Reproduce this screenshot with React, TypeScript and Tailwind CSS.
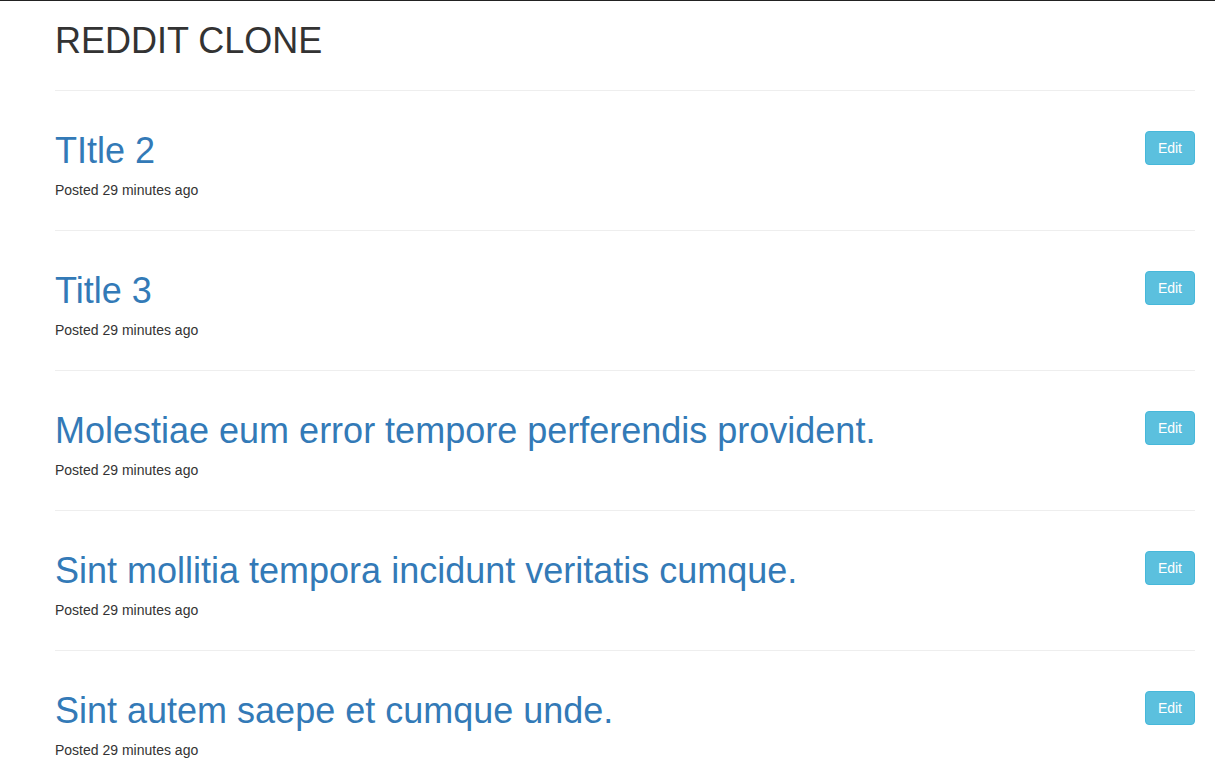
import React from "react";

const posts = [
  "TItle 2",
  "Title 3",
  "Molestiae eum error tempore perferendis provident.",
  "Sint mollitia tempora incidunt veritatis cumque.",
  "Sint autem saepe et cumque unde.",
];

export default function App() {
  return (
    <div
      className="min-h-screen bg-white border-t border-[#222222] text-[#333333] text-[14px] leading-[20px]"
      style={{ fontFamily: '"Liberation Sans", Arial, sans-serif' }}
    >
      <div className="ml-[55px] w-[1140px]">
        <h1 className="mt-[20px] mb-[30px] text-[36px] leading-[39px] font-normal text-[#333333]">
          REDDIT CLONE
        </h1>
        {posts.map((title, i) => (
          <div key={i}>
            <hr className="mt-[20px] mb-[20px] border-0 border-t border-[#eeeeee]" />
            <div className="flex items-start justify-between">
              <div>
                <h1 className="mt-[20px] mb-[10px] text-[36px] leading-[39px] font-normal text-[#337ab7]">
                  <a href="#" className="text-[#337ab7]">
                    {title}
                  </a>
                </h1>
                <p className="mb-[10px]">Posted 29 minutes ago</p>
              </div>
              <button className="mt-[20px] h-[34px] px-[12px] rounded-[4px] bg-[#5bc0de] border border-[#46b8da] text-white text-[14px] leading-[20px]">
                Edit
              </button>
            </div>
          </div>
        ))}
      </div>
    </div>
  );
}
